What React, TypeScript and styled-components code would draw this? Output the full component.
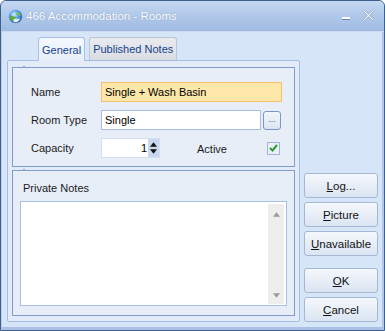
import React, { FC, ReactNode } from 'react';
import styled, { createGlobalStyle } from 'styled-components';

const GlobalStyle = createGlobalStyle`
  html, body {
    margin: 0;
    padding: 0;
    background: #ffffff;
  }
  * {
    box-sizing: border-box;
  }
`;

const Window = styled.div`
  width: 385px;
  height: 331px;
  display: flex;
  flex-direction: column;
  border: 1px solid #3f5f8d;
  border-radius: 6px 6px 0 0;
  background: #d7e5f8;
  box-shadow: inset 1px 0 0 #b9cdea, inset -2px 0 0 #b3c8e6, inset 0 -3px 0 #a9c1e4;
  font-family: 'Liberation Sans', Arial, sans-serif;
  font-size: 11px;
  color: #000000;
  overflow: hidden;
`;

const TitleBar = styled.div`
  height: 31px;
  flex: none;
  display: flex;
  align-items: center;
  padding: 0 6px 0 7px;
  background: linear-gradient(#c5d8f1 0%, #b1c9ea 45%, #a0bbe2 100%);
  border-bottom: 1px solid #c9daf1;
  border-radius: 5px 5px 0 0;
`;

const TitleIcon = styled.svg`
  width: 15px;
  height: 15px;
  flex: none;
`;

const TitleText = styled.span`
  margin-left: 3px;
  font-size: 11.5px;
  color: #ffffff;
  text-shadow: 0 0 1px rgba(60, 90, 140, 0.5);
  flex: 1;
`;

const CaptionButton = styled.div`
  width: 20px;
  height: 20px;
  display: flex;
  align-items: center;
  justify-content: center;
  margin-left: 2px;
`;

const Body = styled.div`
  flex: 1;
  display: flex;
  padding: 4px 6px 8px 6px;
`;

const LeftColumn = styled.div`
  width: 294px;
  display: flex;
  flex-direction: column;
`;

const TabRow = styled.div`
  height: 24px;
  display: flex;
  align-items: flex-end;
  padding-left: 31px;
  gap: 4px;
`;

const Tab = styled.div<{ $active?: boolean }>`
  height: ${({ $active }) => ($active ? '24px' : '23px')};
  padding: 0 3px;
  display: flex;
  align-items: center;
  border: 1px solid ${({ $active }) => ($active ? '#a7c0e3' : '#b8c6d8')};
  border-bottom: none;
  border-radius: 3px 3px 0 0;
  background: ${({ $active }) =>
    $active
      ? 'linear-gradient(#f4f8fd, #e6eef9)'
      : 'linear-gradient(#e9ebef, #d9dde3)'};
  color: #15428b;
  font-size: 11px;
  margin-bottom: ${({ $active }) => ($active ? '-1px' : '0')};
  position: relative;
  z-index: ${({ $active }) => ($active ? 1 : 0)};
`;

const TabPanel = styled.div`
  flex: 1;
  border: 1px solid #a3bde4;
  border-radius: 2px;
  background: #e3ebf8;
  padding: 6px 4px 5px 4px;
  display: flex;
  flex-direction: column;
  gap: 3px;
`;

const Group = styled.div<{ $grow?: boolean }>`
  border: 1px solid #7f9dca;
  background: #e8eef8;
  flex: ${({ $grow }) => ($grow ? 1 : 'none')};
  display: flex;
  flex-direction: column;
  position: relative;
`;

const GroupMark = styled.span`
  position: absolute;
  left: 10px;
  top: -2px;
  width: 2px;
  height: 2px;
  background: #8aa5cf;
`;

const DetailsGrid = styled.div`
  display: grid;
  grid-template-columns: 70px 160px 2px 19px;
  grid-auto-rows: 20px;
  row-gap: 8px;
  padding: 14px 0 8px 18px;
  align-items: center;
`;

const Label = styled.span`
  font-size: 11px;
  color: #1b1b1b;
`;

const TextField = styled.div<{ $highlight?: boolean; $span?: number }>`
  height: 20px;
  grid-column: ${({ $span }) => ($span ? `span ${$span}` : 'auto')};
  border: 1px solid ${({ $highlight }) => ($highlight ? '#f3c06c' : '#a6bde0')};
  background: ${({ $highlight }) => ($highlight ? '#fde8a9' : '#ffffff')};
  display: flex;
  align-items: center;
  padding-left: 3px;
  font-size: 11px;
`;

const BrowseButton = styled.div`
  grid-column: 4;
  width: 18px;
  height: 19px;
  border: 1px solid #7a96c2;
  border-radius: 3px;
  background: linear-gradient(#f1f5fb, #dce6f3);
  display: flex;
  align-items: center;
  justify-content: center;
  font-size: 9px;
  color: #4a5f80;
  padding-bottom: 3px;
`;

const CapacityCell = styled.div`
  grid-column: 2 / 4;
  display: flex;
  align-items: center;
`;

const SpinBox = styled.div`
  width: 59px;
  height: 20px;
  border: 1px solid #d4dfee;
  background: #ffffff;
  display: flex;
  align-items: center;
  justify-content: flex-end;
  font-size: 11px;
`;

const SpinButtons = styled.div`
  width: 11px;
  height: 18px;
  margin-left: 1px;
  background: #c9d8ec;
  display: flex;
  flex-direction: column;
  align-items: center;
  justify-content: space-around;
  padding: 2px 0;
`;

const ActiveLabel = styled(Label)`
  margin-left: 37px;
  padding-top: 2px;
`;

const CheckBox = styled.div`
  grid-column: 4;
  width: 13px;
  height: 13px;
  margin-left: 4px;
  border: 1px solid #9fb6d6;
  background: #e9f0f9;
  display: flex;
  align-items: center;
  justify-content: center;
`;

const NotesLabel = styled(Label)`
  padding: 11px 0 0 10px;
  height: 30px;
`;

const NotesArea = styled.div`
  flex: 1;
  margin: 0 7px 9px 7px;
  border: 1px solid #a8bfe2;
  background: #ffffff;
  display: flex;
  justify-content: flex-end;
  padding: 2px 2px 1px 0;
`;

const ScrollBar = styled.div`
  width: 16px;
  background: #eeeeee;
  display: flex;
  flex-direction: column;
  justify-content: space-between;
  align-items: center;
  padding: 8px 0 6px;
`;

const ButtonColumn = styled.div`
  flex: 1;
  display: flex;
  flex-direction: column;
  align-items: flex-end;
  justify-content: flex-end;
  padding: 0 0 0 4px;
  gap: 4px;
`;

const ButtonGroup = styled.div`
  display: flex;
  flex-direction: column;
  gap: 4px;
`;

const Spacer = styled.div`
  height: 4px;
`;

const DialogButton = styled.div`
  width: 74px;
  height: 25px;
  border: 1px solid #a5b8d3;
  border-radius: 3px;
  background: linear-gradient(#f5f8fc 0%, #e8eef7 50%, #dae4f2 100%);
  display: flex;
  align-items: center;
  justify-content: center;
  font-size: 11.5px;
  color: #111111;
`;

const Key = styled.span`
  text-decoration: underline;
`;

const GlobeIcon: FC = () => (
  <TitleIcon viewBox="0 0 16 16">
    <defs>
      <radialGradient id="globe" cx="0.4" cy="0.35" r="0.7">
        <stop offset="0" stopColor="#d9efff" />
        <stop offset="0.5" stopColor="#4f9be0" />
        <stop offset="1" stopColor="#1d5fa8" />
      </radialGradient>
    </defs>
    <circle cx="8" cy="8" r="7.2" fill="url(#globe)" />
    <path d="M2 8 C4 6 6 9 8 8 C9 10 7 12 5 13 C3 12 2 10 2 8 Z" fill="#5fae3c" />
    <path d="M9 4 C11 3 13 5 14 7 C12 7 11 6 9 6 Z" fill="#78bf4a" />
    <path d="M6 11 C8 10 11 11 13 10 C12 13 9 15 6 14 Z" fill="#ffffff" opacity="0.85" />
  </TitleIcon>
);

const Minimize: FC = () => (
  <svg width="12" height="12" viewBox="0 0 12 12">
    <rect x="2" y="7" width="8" height="2" fill="#ffffff" />
    <rect x="2" y="9" width="8" height="1" fill="#6f88ad" />
  </svg>
);

const Close: FC = () => (
  <svg width="13" height="12" viewBox="0 0 13 12">
    <path d="M2 1 L11 10 M11 1 L2 10" stroke="#6f88ad" strokeWidth="2.2" />
    <path d="M2 1 L11 10 M11 1 L2 10" stroke="#f4f7fb" strokeWidth="1.2" />
  </svg>
);

const Arrow: FC<{ up?: boolean; color: string; size?: number }> = ({
  up,
  color,
  size = 7,
}) => (
  <svg width={size} height={Math.ceil(size / 2) + 1} viewBox="0 0 8 5">
    <path d={up ? 'M0 5 L4 0 L8 5 Z' : 'M0 0 L8 0 L4 5 Z'} fill={color} />
  </svg>
);

const Check: FC = () => (
  <svg width="9" height="8" viewBox="0 0 9 8">
    <path d="M1 4 L3.5 6.5 L8 1" stroke="#2f9b2f" strokeWidth="2" fill="none" />
  </svg>
);

const Button: FC<{ k: string; rest: string }> = ({ k, rest }) => (
  <DialogButton>
    <Key>{k}</Key>
    {rest}
  </DialogButton>
);

const App: FC = (): ReactNode => (
  <>
    <GlobalStyle />
    <Window>
      <TitleBar>
        <GlobeIcon />
        <TitleText>466 Accommodation - Rooms</TitleText>
        <CaptionButton>
          <Minimize />
        </CaptionButton>
        <CaptionButton>
          <Close />
        </CaptionButton>
      </TitleBar>

      <Body>
        <LeftColumn>
          <TabRow>
            <Tab $active>General</Tab>
            <Tab>Published Notes</Tab>
          </TabRow>
          <TabPanel>
            <Group>
              <GroupMark />
              <DetailsGrid>
                <Label>Name</Label>
                <TextField $highlight $span={3}>
                  Single + Wash Basin
                </TextField>

                <Label>Room Type</Label>
                <TextField>Single</TextField>
                <BrowseButton>...</BrowseButton>

                <Label>Capacity</Label>
                <CapacityCell>
                  <SpinBox>
                    1
                    <SpinButtons>
                      <Arrow up color="#111111" />
                      <Arrow color="#111111" />
                    </SpinButtons>
                  </SpinBox>
                  <ActiveLabel>Active</ActiveLabel>
                </CapacityCell>
                <CheckBox>
                  <Check />
                </CheckBox>
              </DetailsGrid>
            </Group>

            <Group $grow>
              <GroupMark />
              <NotesLabel>Private Notes</NotesLabel>
              <NotesArea>
                <ScrollBar>
                  <Arrow up color="#9a9a9a" />
                  <Arrow color="#9a9a9a" />
                </ScrollBar>
              </NotesArea>
            </Group>
          </TabPanel>
        </LeftColumn>

        <ButtonColumn>
          <ButtonGroup>
            <Button k="L" rest="og..." />
            <Button k="P" rest="icture" />
            <Button k="U" rest="navailable" />
          </ButtonGroup>
          <Spacer />
          <ButtonGroup>
            <Button k="O" rest="K" />
            <Button k="C" rest="ancel" />
          </ButtonGroup>
        </ButtonColumn>
      </Body>
    </Window>
  </>
);

export default App;
